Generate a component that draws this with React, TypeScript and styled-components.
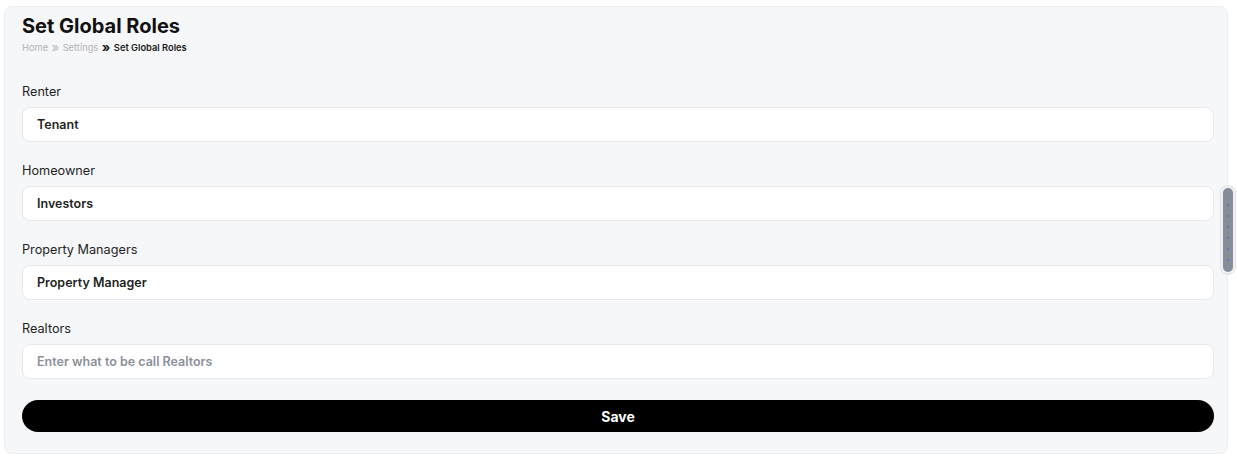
import React from 'react'
import styled, { createGlobalStyle } from 'styled-components'

const GlobalStyle = createGlobalStyle`
  html, body {
    margin: 0;
    padding: 0;
    background: #ffffff;
    font-family: Inter, "Liberation Sans", sans-serif;
    color: #111111;
  }
  * {
    box-sizing: border-box;
  }
`

type Role = {
  label: string
  value: string
  placeholder: string
}

const roles: Role[] = [
  { label: 'Renter', value: 'Tenant', placeholder: 'Enter what to be call Renter' },
  { label: 'Homeowner', value: 'Investors', placeholder: 'Enter what to be call Homeowner' },
  { label: 'Property Managers', value: 'Property Manager', placeholder: 'Enter what to be call Property Managers' },
  { label: 'Realtors', value: '', placeholder: 'Enter what to be call Realtors' },
]

const dot = 'radial-gradient(circle, #5d7fb8 0.7px, transparent 1.3px)'
const dotImages = Array(6).fill(dot).join(', ')
const dotPositions = [0, 1, 2, 3, 4, 5].map((i) => `center ${15 + i * 11}px`).join(', ')

export default function App() {
  const [values, setValues] = React.useState(roles.map((r) => r.value))

  const handleChange = (index: number, value: string) => {
    setValues((prev) => prev.map((v, i) => (i === index ? value : v)))
  }

  return (
    <Page>
      <GlobalStyle />
      <Panel>
        <Header>
          <Title>Set Global Roles</Title>
          <Breadcrumb>
            <Crumb>Home</Crumb>
            <Sep>»</Sep>
            <Crumb>Settings</Crumb>
            <Sep $active>»</Sep>
            <Crumb $active>Set Global Roles</Crumb>
          </Breadcrumb>
        </Header>
        <Form onSubmit={(e) => e.preventDefault()}>
          {roles.map((role, i) => (
            <Field key={role.label}>
              <Label htmlFor={`role-${i}`}>{role.label}</Label>
              <Input
                id={`role-${i}`}
                value={values[i]}
                placeholder={role.placeholder}
                onChange={(e) => handleChange(i, e.target.value)}
              />
            </Field>
          ))}
          <SaveButton type="submit">Save</SaveButton>
        </Form>
      </Panel>
      <ScrollTrack>
        <ScrollThumb />
      </ScrollTrack>
    </Page>
  )
}

const Page = styled.div`
  position: relative;
  width: 1237px;
  height: 457px;
  padding: 6px 9px 0 4px;
`

const Panel = styled.div`
  width: 1224px;
  height: 448px;
  background: #f6f7f9;
  border: 1px solid #eceef1;
  border-radius: 8px;
  padding: 6px 13px 0 17px;
`

const Header = styled.div`
  display: flex;
  flex-direction: column;
  gap: 3px;
  margin-bottom: 30px;
`

const Title = styled.h1`
  margin: 0;
  font-size: 20px;
  line-height: 26px;
  font-weight: 700;
  color: #111111;
`

const Breadcrumb = styled.div`
  display: flex;
  align-items: center;
  gap: 3.5px;
  font-size: 9.3px;
  line-height: 12px;
`

const Crumb = styled.span<{ $active?: boolean }>`
  color: ${(p) => (p.$active ? '#1a1a1a' : '#b3b3b3')};
  font-weight: ${(p) => (p.$active ? 600 : 400)};
`

const Sep = styled.span<{ $active?: boolean }>`
  color: ${(p) => (p.$active ? '#1a1a1a' : '#b8b8b8')};
  font-weight: ${(p) => (p.$active ? 700 : 400)};
  font-size: 13px;
  line-height: 12px;
  margin-top: -2px;
`

const Form = styled.form`
  display: flex;
  flex-direction: column;
  gap: 21px;
`

const Field = styled.div`
  display: flex;
  flex-direction: column;
  gap: 7px;
`

const Label = styled.label`
  font-size: 12.7px;
  line-height: 16px;
  color: #1f1f1f;
`

const Input = styled.input`
  height: 35px;
  width: 100%;
  padding: 0 14px;
  background: #ffffff;
  border: 1px solid #e6e8eb;
  border-radius: 8px;
  font-family: Inter, "Liberation Sans", sans-serif;
  font-size: 12.5px;
  font-weight: 600;
  color: #1f1f1f;
  outline: none;

  &::placeholder {
    color: #8c9099;
    font-weight: 600;
  }
`

const SaveButton = styled.button`
  height: 32px;
  width: 100%;
  border: none;
  border-radius: 16px;
  background: #000000;
  color: #ffffff;
  font-family: Inter, "Liberation Sans", sans-serif;
  font-size: 14px;
  font-weight: 700;
  cursor: pointer;
`

const ScrollTrack = styled.div`
  position: absolute;
  left: 1220px;
  top: 185px;
  width: 16px;
  height: 90px;
  padding: 2px;
  border-radius: 8px;
  background: #f0f1f3;
  border: 1px solid #e3e4e6;
`

const ScrollThumb = styled.div`
  width: 100%;
  height: 100%;
  border-radius: 6px;
  background-color: #868d99;
  background-image: ${dotImages};
  background-size: 4px 4px;
  background-repeat: no-repeat;
  background-position: ${dotPositions};
`
